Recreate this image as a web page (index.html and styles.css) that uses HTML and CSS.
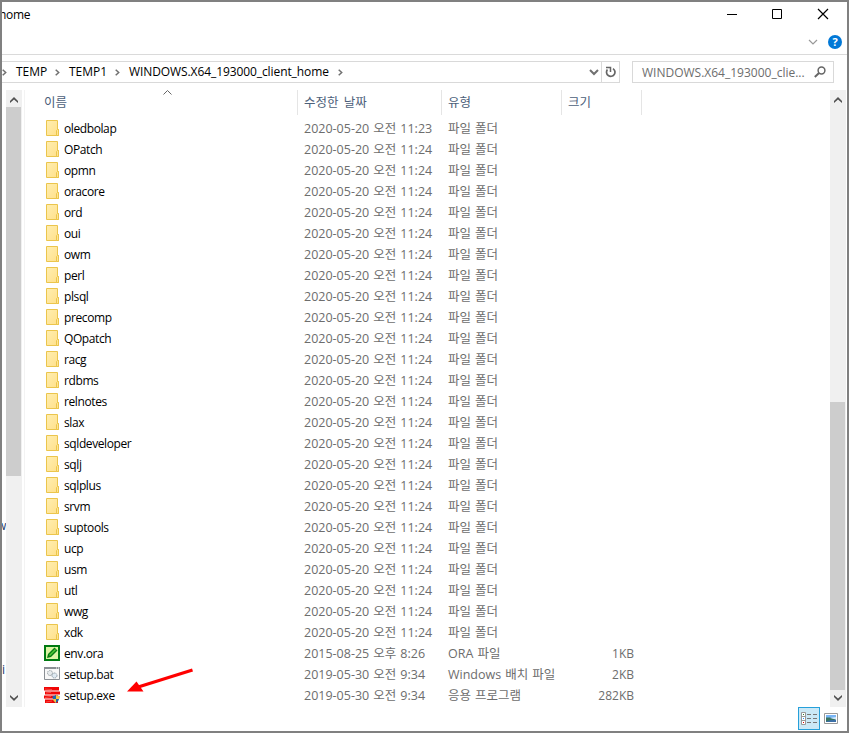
FILE: index.html
```html
<!DOCTYPE html>
<html lang="ko">
    <head>
        <meta charset="utf-8">
        <title>WINDOWS.X64_193000_client_home</title>
        <link rel="stylesheet" href="styles.css">
    </head>
    <body>
        <svg class="defs">
            <linearGradient id="paper" x1="0" y1="0" x2="1" y2="1">
                <stop offset="0" stop-color="#ffeeb0"/>
                <stop offset="1" stop-color="#ffe08a"/>
            </linearGradient>
            <symbol id="folder" viewBox="0 0 16 16">
                <path d="M2.500.5h11v9h1v6h-12z" fill="url(#paper)" stroke="#ebc54c"/>
                <path d="M12.500 15.500v-5l1-1h1v6z" fill="#ffe594" stroke="#ebc54c"/>
            </symbol>
            <symbol id="ora" viewBox="0 0 16 16">
                <path d="M1 1h14v14H1z" fill="#dcf5a4" stroke="#007a12" stroke-width="2"/>
                <path d="M3 13l1-4 6.500-6.500 3 3L7 12z" fill="#087d12"/>
                <path d="M5.500 10.500l6-6" stroke="#54c936" stroke-width="1.500"/>
            </symbol>
            <symbol id="bat" viewBox="0 0 16 16">
                <path d="M.5 1.500h15v12H.5z" fill="#f8f8f8" stroke="#8a8f94"/>
                <path d="M0 2h16" stroke="#8a8f94" stroke-width="2"/>
                <path d="M12 2h1M14 2h1" stroke="#fff"/>
                <circle cx="6" cy="7" r="2.500" fill="#e6eaec" stroke="#9aa3a8" stroke-dasharray="1.500 .6"/>
                <circle cx="10.500" cy="9.500" r="2.500" fill="#dfeaf2" stroke="#8f9ca6" stroke-dasharray="1.500 .6"/>
            </symbol>
            <symbol id="exe" viewBox="0 0 16 16">
                <path d="M0 0h15v3.500H0zM1 4.500h15v3H1zM0 8.500h14v3H0zM1 12.500h13V16H1z" fill="#f00505"/>
                <path d="M1 2l7 .6M2 6l5-.6M1 10.500l6-1M2 15l6-1" stroke="#ff8c80" fill="none" stroke-width=".5"/>
                <path d="M8.500 9q2.500 0 3.500-1.200Q13 9 15.500 9q0 5-3.500 7-3.500-2-3.500-7z" fill="#1c68b0"/>
                <path d="M12 7.800Q13 9 15.500 9l-.3 3H12zM12 12v4q-2.500-1.400-3.200-4z" fill="#fbc73d"/>
            </symbol>
            <symbol id="chevron-up" viewBox="0 0 8 7"><path d="M0 5L4 1l4 4v2L4 3.500 0 7z"/></symbol>
            <symbol id="chevron-down" viewBox="0 0 8 7"><path d="M0 2l4 4 4-4V0L4 3.500 0 0z"/></symbol>
            <symbol id="crumb" viewBox="0 0 5 7"><path d="M.7.7L3.700 3.500.7 6.300" fill="none" stroke="#707070" stroke-width="1.500"/></symbol>
        </svg>

        <div class="window">
            <div class="titlebar">
                <span class="caption">home</span>
                <svg class="controls" width="104" height="12">
                    <path d="M0 6.500h10M45.500 1.500h9v9h-9z" fill="none" stroke="#000"/>
                    <path d="M91 1l10 10M101 1L91 11" stroke="#000" stroke-width="1.200"/>
                </svg>
            </div>
            <div class="ribbon">
                <svg width="10" height="6"><path d="M1 1l4 4 4-4" fill="none" stroke="#999" stroke-width="1.200"/></svg>
                <span class="help">?</span>
            </div>
            <div class="toolbar">
                <div class="address">
                    <svg class="sep first"><use href="#crumb"/></svg>
                    <span class="crumb temp">TEMP</span>
                    <svg class="sep"><use href="#crumb"/></svg>
                    <span class="crumb temp1">TEMP1</span>
                    <svg class="sep"><use href="#crumb"/></svg>
                    <span class="crumb current">WINDOWS.X64_193000_client_home</span>
                    <svg class="sep"><use href="#crumb"/></svg>
                    <svg class="drop" width="10" height="7"><path d="M1 1l4 4 4-4" fill="none" stroke="#707070" stroke-width="2"/></svg>
                    <span class="refresh">
                        <svg width="11" height="12">
                            <path d="M8 2.600A4.200 4.200 0 1 1 2.400 3.600" fill="none" stroke="#666" stroke-width="1.700"/>
                            <path d="M1 1.500h4.500V6" fill="none" stroke="#666" stroke-width="1.500"/>
                        </svg>
                    </span>
                </div>
                <div class="search">
                    <span class="search-text">WINDOWS.X64_193000_clie...</span>
                    <svg width="12" height="12"><circle cx="7.500" cy="4.500" r="3.400" fill="none" stroke="#666" stroke-width="1.500"/><path d="M5 7L.8 11" stroke="#666" stroke-width="2"/></svg>
                </div>
            </div>

            <div class="main">
                <div class="nav">
                    <span class="nav-text nav-w">w</span>
                    <span class="nav-text nav-i">i</span>
                </div>
                <div class="scrollbar left">
                    <svg class="arrow"><use href="#chevron-up"/></svg>
                    <div class="thumb"></div>
                    <svg class="arrow down"><use href="#chevron-down"/></svg>
                </div>
                <div class="list">
                    <div class="header">
                        <span class="col">이름<svg class="sort" width="9" height="5"><path d="M.5 4.500l4-4 4 4" fill="none" stroke="#666"/></svg></span>
                        <span class="col">수정한 날짜</span>
                        <span class="col">유형</span>
                        <span class="col">크기</span>
                    </div>
                    <div class="rows" id="rows"></div>
                </div>
                <div class="scrollbar right">
                    <svg class="arrow"><use href="#chevron-up"/></svg>
                    <div class="thumb"></div>
                    <svg class="arrow down"><use href="#chevron-down"/></svg>
                </div>
            </div>

            <div class="statusbar">
                <span class="view selected">
                    <svg width="16" height="14">
                        <path d="M.5.5h4v12h-4zM.5 4.500h4M.5 8.500h4" fill="#fff" stroke="#999"/>
                        <path d="M6 2.500h4M12 2.500h4M6 6.500h4M12 6.500h4M6 10.500h4M12 10.500h4" stroke="#777"/>
                        <path d="M2 2.500h1" stroke="#287a35"/><path d="M2 6.500h1" stroke="#288cff"/><path d="M2 10.500h1" stroke="#e00000"/>
                    </svg>
                </span>
                <span class="view">
                    <svg width="14" height="11">
                        <path d="M.5.5h13v10H.5z" fill="#fff" stroke="#999"/>
                        <path d="M2 2h10v7H2z" fill="#78b5f5"/>
                        <path d="M2 4.500h4l6 2V9H2z" fill="#397461"/>
                        <path d="M6 5l6-1v2.500z" fill="#d5eafa"/>
                        <path d="M2 8.500l5-1.500h5v2H2z" fill="#3c6fa7"/>
                    </svg>
                </span>
            </div>

            <svg class="pointer" width="67" height="26">
                <path d="M65.500 2L12 18.800" stroke="#f00" stroke-width="3.200"/>
                <path d="M0 23.500L9.500 13.500 16.500 23.500z" fill="#f00"/>
            </svg>
        </div>

        <script>
            const folders = ["oledbolap", "OPatch", "opmn", "oracore", "ord", "oui", "owm", "perl", "plsql",
                "precomp", "QOpatch", "racg", "rdbms", "relnotes", "slax", "sqldeveloper", "sqlj", "sqlplus",
                "srvm", "suptools", "ucp", "usm", "utl", "wwg", "xdk"];
            const files = folders.map((name, i) => {
                return ["folder", name, i === 0 ? "2020-05-20 오전 11:23" : "2020-05-20 오전 11:24", "파일 폴더", ""];
            });
            files.push(["ora", "env.ora", "2015-08-25 오후 8:26", "ORA 파일", "1KB"]);
            files.push(["bat", "setup.bat", "2019-05-30 오전 9:34", "Windows 배치 파일", "2KB"]);
            files.push(["exe", "setup.exe", "2019-05-30 오전 9:34", "응용 프로그램", "282KB"]);

            document.getElementById("rows").innerHTML = files.map(([icon, name, date, type, size]) => `
                <div class="row">
                    <span class="name"><svg width="16" height="16"><use href="#${icon}"/></svg><span>${name}</span></span>
                    <span class="date">${date}</span>
                    <span class="type">${type}</span>
                    <span class="size">${size}</span>
                </div>`).join("");
        </script>
    </body>
</html>
```

FILE: styles.css
```css
* {
    box-sizing: border-box;
}
body {
    margin: 0;
    font-family: "Open Sans", "Noto Sans CJK KR", sans-serif;
    font-size: 12px;
    color: #000;
}
svg {
    flex: none;
    display: block;
}
.defs {
    position: absolute;
    width: 0;
    height: 0;
}
.window {
    position: relative;
    width: 849px;
    height: 733px;
    border: 2px solid #808080;
    background-color: #fff;
    display: flex;
    flex-direction: column;
    overflow: hidden;
    white-space: nowrap;
}
.titlebar {
    height: 24px;
    display: flex;
    justify-content: space-between;
    align-items: center;
    padding-right: 16px;
}
.caption {
    margin-left: -3px;
    letter-spacing: -0.3px;
}
.ribbon {
    height: 29px;
    border-bottom: 1px solid #dadada;
    display: flex;
    justify-content: flex-end;
    align-items: center;
    gap: 10px;
    padding: 3px 5px 0 0;
}
.help {
    width: 14px;
    height: 14px;
    border-radius: 50%;
    background-color: #0078d7;
    color: #fff;
    font-size: 11px;
    font-weight: bold;
    line-height: 14px;
    text-align: center;
}
.toolbar {
    height: 35px;
    padding: 6px 13px 7px 0;
    display: flex;
    gap: 12px;
}
.address {
    width: 618px;
    border: 1px solid #d9d9d9;
    border-left: none;
    display: flex;
    align-items: center;
}
.sep {
    width: 5px;
    height: 7px;
    margin: 0 9px;
}
.sep.first {
    margin-left: 0;
}
.crumb {
    line-height: 20px;
}
.temp {
    width: 30px;
}
.temp1 {
    width: 37px;
}
.current {
    width: 200px;
    letter-spacing: -0.09px;
}
.drop {
    margin-left: auto;
    margin-right: 2px;
}
.refresh {
    width: 18px;
    height: 100%;
    border-left: 1px solid #d9d9d9;
    display: flex;
    align-items: center;
    justify-content: center;
}
.search {
    flex: 1;
    border: 1px solid #d9d9d9;
    padding: 0 7px 0 9px;
    display: flex;
    align-items: center;
    justify-content: space-between;
    color: #6d6d6d;
}
.main {
    height: 617px;
    display: flex;
}
.nav {
    width: 4px;
    overflow: hidden;
    padding-top: 427px;
}
.nav-text {
    display: block;
    height: 18px;
    line-height: 18px;
    color: #1b3c6b;
}
.nav-w {
    margin-left: -5px;
    margin-bottom: 126px;
}
.scrollbar {
    width: 16px;
    background-color: #f0f0f0;
    display: flex;
    flex-direction: column;
}
.scrollbar.right {
    margin-right: 1px;
}
.arrow {
    width: 8px;
    height: 7px;
    margin: 6px 0 4px 4px;
    fill: #505050;
}
.arrow.down {
    margin: auto 0 5px 4px;
}
.thumb {
    width: 15px;
    background-color: #cdcdcd;
}
.left .thumb {
    height: 369px;
}
.right .thumb {
    height: 288px;
    margin-top: 295px;
}
.list {
    flex: 1;
    margin-left: 2px;
    border-left: 1px solid #f3f3f3;
}
.header {
    height: 25px;
    display: grid;
    grid-template-columns: 273px 144px 120px 80px;
    color: #4c607a;
    font-size: 12.5px;
    word-spacing: 2px;
    line-height: 25px;
}
.col {
    position: relative;
    border-right: 1px solid #e5e5e5;
    padding-left: 6px;
}
.col:first-child {
    padding-left: 19px;
}
.sort {
    position: absolute;
    left: 138px;
    top: 0;
}
.rows {
    padding-top: 3px;
}
.row {
    height: 21px;
    line-height: 21px;
    display: grid;
    grid-template-columns: 260px 144px 120px 66px;
    padding-left: 19px;
    color: #6d6d6d;
}
.name {
    display: flex;
    align-items: flex-start;
    gap: 4px;
    color: #000;
    letter-spacing: -0.4px;
}
.name svg {
    margin-top: 2px;
}
.date, .type {
    font-size: 12.5px;
    word-spacing: 0.8px;
}
.size {
    text-align: right;
}
.statusbar {
    height: 24px;
    display: flex;
    justify-content: flex-end;
    padding-right: 5px;
}
.view {
    width: 22px;
    height: 23px;
    display: flex;
    align-items: center;
    justify-content: center;
}
.view.selected {
    border: 1px solid #26a0da;
    background-color: #cbe8f6;
}
.pointer {
    position: absolute;
    left: 125px;
    top: 666px;
}
```
